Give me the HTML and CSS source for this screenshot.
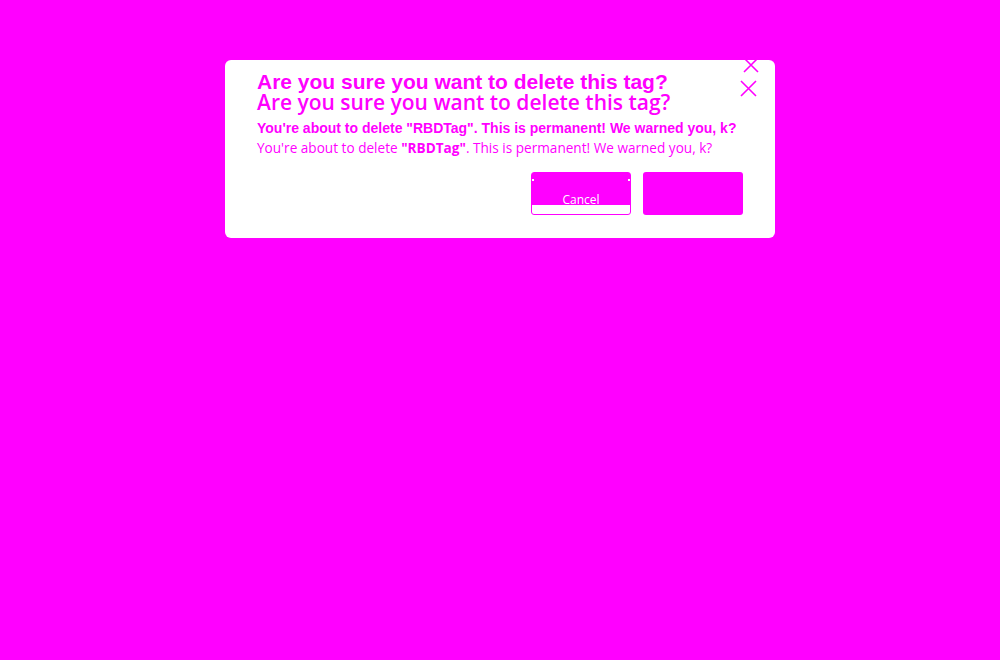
FILE: index.html
```html
<!DOCTYPE html>
<html>
<head>
<meta charset="utf-8">
<link rel="stylesheet" href="styles.css">
</head>
<body>
<div class="page">
  <div class="dialog">
    <div class="head">
      <div class="titles">
        <div class="title t1">Are you sure you want to delete this tag?</div>
        <div class="title t2">Are you sure you want to delete this tag?</div>
      </div>
      <div class="closes">
        <svg class="x x1" width="16" height="16" viewBox="0 0 16 16"><path d="M1 1L15 15M15 1L1 15" stroke="#ff00ff" stroke-width="1.6" fill="none"/></svg>
        <svg class="x x2" width="17" height="17" viewBox="0 0 17 17"><path d="M1 1L16 16M16 1L1 16" stroke="#ff00ff" stroke-width="1.6" fill="none"/></svg>
      </div>
    </div>
    <p class="msg m1">You're about to delete "RBDTag". This is permanent! We warned you, k?</p>
    <p class="msg m2">You're about to delete <b>"RBDTag"</b>. This is permanent! We warned you, k?</p>
    <div class="actions">
      <button class="btn cancel"><span>Cancel</span></button>
      <button class="btn del"></button>
    </div>
  </div>
</div>
</body>
</html>
```
FILE: styles.css
```css
html, body {
  margin: 0;
  padding: 0;
  background: #ff00ff;
}
.page {
  width: 1000px;
  height: 660px;
  padding-top: 60px;
  box-sizing: border-box;
}
.dialog {
  width: 550px;
  height: 178px;
  margin-left: 225px;
  background: #fff;
  border-radius: 6px;
  box-sizing: border-box;
  padding: 11px 32px 0 32px;
  color: #ff00ff;
}
.head {
  display: flex;
  justify-content: space-between;
}
.title {
  font-size: 21px;
  line-height: 21px;
  white-space: nowrap;
}
.t1 {
  font-family: "Liberation Sans", Arial, sans-serif;
  font-weight: 700;
}
.t2 {
  font-family: "Open Sans", sans-serif;
  font-weight: 600;
}
.closes {
  position: relative;
  width: 20px;
}
.x {
  position: absolute;
  display: block;
}
.x1 { left: 20px; top: -14px; }
.x2 { left: 17px; top: 9px; }
.msg {
  margin: 0;
  line-height: 20px;
  white-space: nowrap;
}
.m1 {
  margin-top: 5px;
  font-size: 14px;
  font-family: "Liberation Sans", Arial, sans-serif;
  font-weight: 700;
}
.m2 {
  font-size: 13.6px;
  font-family: "Open Sans", sans-serif;
  font-weight: 400;
}
.m2 b { font-weight: 700; }
.actions {
  display: flex;
  justify-content: flex-end;
  gap: 12px;
  margin-top: 14px;
}
.btn {
  width: 100px;
  height: 43px;
  border-radius: 3px;
  padding: 0;
  margin: 0;
  font-family: "Open Sans", sans-serif;
  font-size: 12px;
}
.cancel {
  position: relative;
  border: 1px solid #ff00ff;
  background: linear-gradient(#ff00ff 0, #ff00ff 32px, #fff 32px);
  color: #fff;
  display: flex;
  align-items: flex-start;
  justify-content: center;
  padding-top: 18px;
  box-sizing: border-box;
}
.cancel::before,
.cancel::after {
  content: "";
  position: absolute;
  top: 6px;
  width: 2px;
  height: 2px;
  background: #fff;
}
.cancel::before { left: 0; }
.cancel::after { right: 0; }
.del {
  border: none;
  background: #ff00ff;
}
```
